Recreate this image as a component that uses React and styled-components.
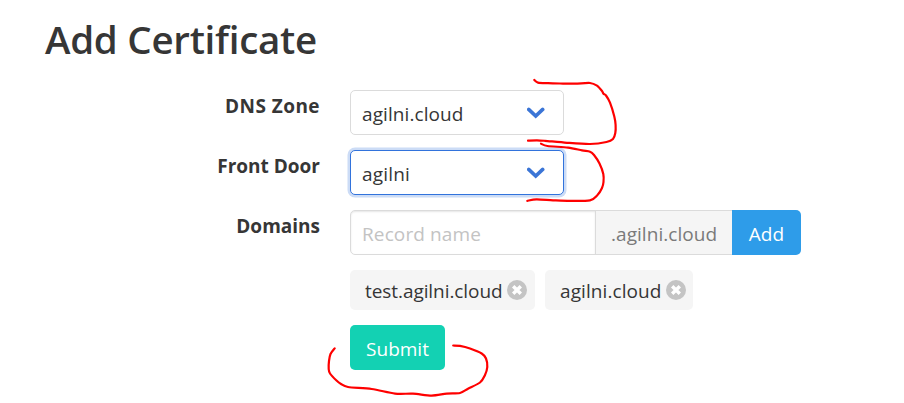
import React from "react";
import styled, { createGlobalStyle, css } from "styled-components";

const GlobalStyle = createGlobalStyle`
  * { box-sizing: border-box; }
  body {
    margin: 0;
    background: #fff;
    color: #363636;
    font-family: "Open Sans", "Noto Sans", sans-serif;
    font-size: 19px;
    line-height: 30px;
    overflow: hidden;
  }
`;

const Page = styled.main`
  position: relative;
  width: 904px;
  height: 403px;
  padding: 17px 45px 0;
`;

const Title = styled.h1`
  margin: 0 0 28px;
  height: 45px;
  font-size: 38.5px;
  line-height: 45px;
  font-weight: 550;
  letter-spacing: -0.28px;
  white-space: nowrap;
`;

const Form = styled.form`
  display: grid;
  grid-template-columns: 275px 451px;
  column-gap: 30px;
  row-gap: 15px;
`;

const Label = styled.label`
  padding-top: 1px;
  font-size: 19px;
  font-weight: 700;
  text-align: right;
  white-space: nowrap;
  letter-spacing: ${(p) => p.$spacing || 0}px;
`;

const controlBox = css`
  height: 45px;
  border: 1px solid #dbdbdb;
  border-radius: 5px;
  font: inherit;
`;

const Text = styled.span`
  letter-spacing: ${(p) => p.$spacing || 0}px;
  white-space: nowrap;
`;

const Select = styled.div`
  ${controlBox}
  display: flex;
  align-items: center;
  justify-content: space-between;
  width: 214px;
  padding: 1px 18px 0 11px;
  background: #fff;
  & > ${Text} {
    padding-top: 2px;
  }
  ${(p) =>
    p.$focused &&
    css`
      border-color: #3273dc;
      box-shadow: 0 0 0 2.5px rgba(50, 115, 220, 0.25);
    `}
`;

const Addons = styled.div`
  display: flex;
`;

const Input = styled.input`
  ${controlBox}
  width: 246px;
  padding: 3px 11px 0;
  border-radius: 5px 0 0 5px;
  box-shadow: inset 0 1px 2px rgba(10, 10, 10, 0.1);
  outline: none;
  letter-spacing: -0.17px;
  &::placeholder {
    color: #c3c3c3;
    opacity: 1;
    letter-spacing: 0.12px;
  }
`;

const Suffix = styled.div`
  ${controlBox}
  display: flex;
  align-items: center;
  width: 137px;
  margin-left: -1px;
  padding: 2px 0 0 15px;
  border-right: 0;
  border-radius: 0;
  background: #f5f5f5;
  color: #7a7a7a;
`;

const Button = styled.button`
  height: 45px;
  width: ${(p) => p.$width}px;
  padding: 2px 0 0;
  border: 0;
  border-radius: ${(p) => (p.$attached ? "0 5px 5px 0" : "5px")};
  background: ${(p) => p.$color};
  color: #fff;
  font: inherit;
  letter-spacing: ${(p) => p.$spacing || 0}px;
`;

const Tags = styled.div`
  grid-column: 2;
  display: flex;
  gap: 10px;
`;

const Tag = styled.span`
  display: flex;
  align-items: center;
  justify-content: space-between;
  width: ${(p) => p.$width}px;
  height: 40px;
  padding: 0 ${(p) => p.$end || 7}px 0 15px;
  border-radius: 5px;
  background: #f5f5f5;
  & > ${Text} {
    padding-top: 2px;
  }
`;

const Submit = styled.div`
  grid-column: 2;
  display: flex;
`;

const Ink = styled.svg`
  position: absolute;
  inset: 0;
  pointer-events: none;
`;

const Chevron = () => (
  <svg width="18" height="12" viewBox="0 0 18 12" fill="none">
    <path d="M1.7 2.4 L8.7 9 L15.7 2.4" stroke="#3b75d6" strokeWidth="3.6" strokeLinecap="round" strokeLinejoin="miter" />
  </svg>
);

const Remove = () => (
  <svg width="20" height="20" viewBox="0 0 20 20">
    <circle cx="10" cy="10" r="10" fill="#c4c4c4" />
    <path d="M6.2 6.2 L13.8 13.8 M13.8 6.2 L6.2 13.8" stroke="#fff" strokeWidth="3.4" />
  </svg>
);

const strokes = [
  [[534.3,80],[538,82.6],[548,83.2],[560,83.5],[575,83.7],[590,83],[597,85.7],[602,91],[603.5,93.8],[606,95.5],[610,102.7],[614.3,116.5],[615.6,125],[615.3,133],[613,139],[606.5,142],[590,144],[567,142.8],[545,140.8],[537,140.3],[528,140.6]],
  [[541,143.7],[547.5,146],[568,147.6],[582,150.4],[590,151.7],[594,155],[599.5,163.5],[603.3,174],[603.5,182],[602,188],[597.5,195],[590,200.3],[570,200.9],[553,200.3],[536.5,199.4],[527.3,200.8]],
  [[334.7,348.3],[330.5,354],[329,361],[328.7,369],[330,373.5],[336.5,380.5],[341,384],[348,387],[371.7,389],[395,393.6],[413,393.7],[431.7,395.6],[446.7,393.6],[460,393],[468,388.7],[480,382.5],[484.8,375.5],[487.3,367],[486,358.5],[481.7,353.5],[470,348.5],[460,345.9],[453.2,345.5]],
];

// Catmull-Rom interpolation rendered as cubic segments.
const smooth = (pts) =>
  pts.slice(0, -1).reduce((d, p1, i) => {
    const p0 = pts[i - 1] || p1;
    const p2 = pts[i + 1];
    const p3 = pts[i + 2] || p2;
    const c = [0, 1].map((k) => p1[k] + (p2[k] - p0[k]) / 7);
    const e = [0, 1].map((k) => p2[k] - (p3[k] - p1[k]) / 7);
    return `${d} C${c} ${e} ${p2}`;
  }, `M${pts[0]}`);

export default function App() {
  return (
    <Page>
      <GlobalStyle />
      <Title>Add Certificate</Title>
      <Form onSubmit={(e) => e.preventDefault()}>
        <Label $spacing={0.45}>DNS Zone</Label>
        <Select><Text $spacing={0.08}>agilni.cloud</Text><Chevron /></Select>
        <Label>Front Door</Label>
        <Select $focused><Text $spacing={0.2}>agilni</Text><Chevron /></Select>
        <Label>Domains</Label>
        <Addons>
          <Input placeholder="Record name" />
          <Suffix><Text $spacing={0.05}>.agilni.cloud</Text></Suffix>
          <Button type="button" $attached $width={69} $color="#2e9ce9">Add</Button>
        </Addons>
        <Tags>
          <Tag $width={185} $end={8}><Text $spacing={-0.07}>test.agilni.cloud</Text><Remove /></Tag>
          <Tag $width={148}><Text $spacing={0.08}>agilni.cloud</Text><Remove /></Tag>
        </Tags>
        <Submit>
          <Button type="submit" $width={95} $color="#13d1b3">Submit</Button>
        </Submit>
      </Form>
      <Ink width="904" height="403" fill="none" stroke="#fe0000" strokeWidth="2.2" strokeLinecap="round" strokeLinejoin="round">
        {strokes.map((pts, i) => <path key={i} d={smooth(pts)} />)}
      </Ink>
    </Page>
  );
}
